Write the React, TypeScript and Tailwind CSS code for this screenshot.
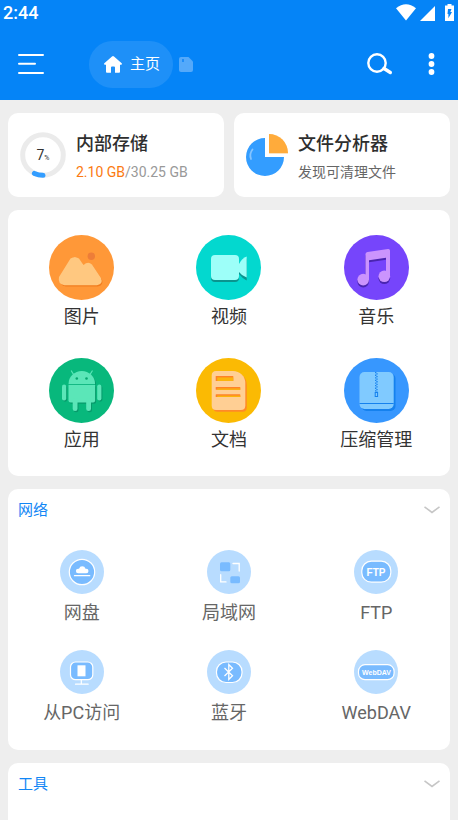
import type { ReactNode } from "react";
import { twMerge } from "tailwind-merge";

type Shortcut = {
  label: string;
  icon: ReactNode;
};

/* ---------- category icons (65 x 65) ---------- */

const PictureIcon = () => (
  <svg viewBox="0 0 65 65" className="size-full">
    <circle cx="32.5" cy="32.5" r="32.5" fill="#ff9838" />
    <path
      d="M22 24q4-4 8 0l4.500 6.500q5-4.500 9 0l9.500 14q2 6-4.500 7H17q-7-1-5.500-8z"
      fill="#f27c1e"
    />
    <path
      d="M21.500 23.500q4.500-3 8.500 0l4.500 6.500q4.500-4 8.500-.5l9 13.500q2.500 6-4 7.200H15.500q-7-1-5.500-8.200z"
      fill="#ffc880"
    />
    <circle cx="42.3" cy="21.3" r="3.7" fill="#ee7d38" />
  </svg>
);

const VideoIcon = () => (
  <svg viewBox="0 0 65 65" className="size-full">
    <circle cx="32.5" cy="32.5" r="32.5" fill="#03d8cf" />
    <g fill="#0a948e">
      <rect x="15" y="22" width="28" height="25" rx="4" />
      <path d="M43 31q3-6 7.700-7.500v22Q46 43 43 39z" />
    </g>
    <g fill="#9dfff9">
      <rect x="15" y="20" width="28" height="25" rx="4" />
      <path d="M43 29q3-6 7.700-7.500v21Q46 41 43 37z" />
    </g>
  </svg>
);

const NoteShape = () => (
  <>
    <circle cx="19.200" cy="44.600" r="5.800" />
    <circle cx="40.300" cy="41.300" r="5.800" />
    <path d="M21.500 19q0-1.800 2-2.100l20.500-2.900q2-.2 2 1.600V41.500h-4V22.700l-17 2.500v19.500h-3.500z" />
  </>
);

const MusicIcon = () => (
  <svg viewBox="0 0 65 65" className="size-full">
    <circle cx="32.5" cy="32.5" r="32.5" fill="#7645fb" />
    <g fill="#4a25b0" transform="translate(0 2)">
      <NoteShape />
    </g>
    <g fill="#cb94fd">
      <NoteShape />
    </g>
  </svg>
);

const AndroidShape = () => (
  <>
    <path d="M19.500 26a13.300 13 0 0 1 26.600 0z" />
    <path d="M19.500 27h26.600v15.500q0 2-2 2H21.500q-2 0-2-2z" />
    <rect x="13" y="26.500" width="4.200" height="16" rx="2.100" />
    <rect x="48.200" y="26.500" width="4.200" height="16" rx="2.100" />
    <rect x="23.700" y="40" width="4.800" height="13" rx="2.300" />
    <rect x="37.200" y="40" width="4.800" height="13" rx="2.300" />
  </>
);

const AppIcon = () => (
  <svg viewBox="0 0 65 65" className="size-full">
    <circle cx="32.5" cy="32.5" r="32.500" fill="#08b87c" />
    <g fill="#079a6b" transform="translate(1 1.2)">
      <AndroidShape />
    </g>
    <g fill="#5be6b8">
      <AndroidShape />
    </g>
    <path
      d="M22.400 13l2.200 3.500M43.200 13L41 16.500"
      stroke="#5be6b8"
      strokeWidth="1.200"
      strokeLinecap="round"
    />
    <path d="M19.500 26.500h26.600" stroke="#19c18a" strokeWidth=".8" />
    <circle cx="27.800" cy="20.500" r="1.300" fill="#08a870" />
    <circle cx="37.500" cy="20.500" r="1.300" fill="#08a870" />
  </svg>
);

const docPath =
  "M20 13h17a12.300 12 0 0 1 12.300 12v22.500q0 4.500-4.500 4.500H20q-4.300 0-4.300-4.500v-30Q15.700 13 20 13z";

const DocIcon = () => (
  <svg viewBox="0 0 65 65" className="size-full">
    <circle cx="32.5" cy="32.5" r="32.5" fill="#fbba03" />
    <path d={docPath} fill="#ff8a28" transform="translate(1.5 1.8)" />
    <path d={docPath} fill="#ffcf94" />
    <g fill="#ff8128">
      <rect x="19.700" y="18" width="17.600" height="5" rx=".6" />
      <rect x="19.700" y="29" width="24.600" height="2.800" rx=".6" />
      <rect x="19.700" y="36.200" width="24.600" height="2.800" rx=".6" />
    </g>
    <g fill="#fbb40c">
      <rect x="21.200" y="19.400" width="16.100" height="3.600" />
      <rect x="21.200" y="30.400" width="23.100" height="1.400" />
      <rect x="21.200" y="37.600" width="23.100" height="1.400" />
    </g>
  </svg>
);

const ZipIcon = () => (
  <svg viewBox="0 0 65 65" className="size-full">
    <circle cx="32.5" cy="32.5" r="32.5" fill="#3797fe" />
    <rect x="17.500" y="15.500" width="34" height="37.500" rx="5" fill="#1581ee" />
    <rect x="15.500" y="14" width="34.200" height="37" rx="5" fill="#80caff" />
    <path d="M15.500 45.500h34.200" stroke="#1581ee" strokeWidth="1" />
    <path d="M31.700 14v20" stroke="#1581ee" strokeWidth="1.300" strokeDasharray="1.300 1.300" />
    <path
      d="M33 15.300v20"
      stroke="#1581ee"
      strokeWidth="1.300"
      strokeDasharray="1.300 1.300"
    />
    <rect x="31.200" y="34.500" width="2.400" height="4" fill="none" stroke="#1581ee" strokeWidth="1" />
  </svg>
);

/* ---------- network icons (44 x 44) ---------- */

const CloudIcon = () => (
  <svg viewBox="0 0 44 44" className="size-full">
    <circle cx="22" cy="22" r="22" fill="#b8dcff" />
    <circle cx="22" cy="22" r="12.700" fill="#79bbff" stroke="#fff" strokeWidth="1.200" />
    <path
      d="M18.200 23.300a2.300 2.300 0 0 1 0-4.600h.8a3.400 3.400 0 0 1 6.500 0h.7a2.300 2.300 0 0 1 0 4.600z"
      fill="#fff"
    />
    <path d="M14.500 25.700h15.200" stroke="#fff" strokeWidth="1.300" strokeLinecap="round" />
  </svg>
);

const LanIcon = () => (
  <svg viewBox="0 0 44 44" className="size-full">
    <circle cx="22" cy="22" r="22" fill="#b8dcff" />
    <rect x="13" y="12.300" width="10.300" height="9" rx="1.500" fill="#79bbff" />
    <rect x="23.300" y="26.300" width="9.700" height="7" rx="1.500" fill="#79bbff" />
    <path
      d="M26 13.500h6.200v7.500M13.700 24.700v7.200H19"
      fill="none"
      stroke="#fff"
      strokeWidth="1.300"
      strokeLinecap="round"
    />
  </svg>
);

const FtpIcon = () => (
  <svg viewBox="0 0 44 44" className="size-full">
    <circle cx="22" cy="22" r="22" fill="#b8dcff" />
    <rect x="7.800" y="11.200" width="29" height="21" rx="9.500" fill="#79bbff" stroke="#fff" strokeWidth="1.200" />
    <text
      x="22"
      y="25.500"
      textAnchor="middle"
      fill="#fff"
      className="font-['Liberation_Sans',sans-serif] text-[10px] font-bold"
    >
      FTP
    </text>
  </svg>
);

const PcIcon = () => (
  <svg viewBox="0 0 44 44" className="size-full">
    <circle cx="22" cy="22" r="22" fill="#b8dcff" />
    <rect x="10.500" y="12" width="22.300" height="17.700" rx="5" fill="#79bbff" stroke="#fff" strokeWidth="1.200" />
    <rect x="17.500" y="15.300" width="8" height="11" fill="#fff" />
    <path
      d="M21.300 30v4M15.500 34.200h12.700"
      stroke="#fff"
      strokeWidth="1.200"
      strokeLinecap="round"
    />
  </svg>
);

const BluetoothIcon = () => (
  <svg viewBox="0 0 44 44" className="size-full">
    <circle cx="22" cy="22" r="22" fill="#b8dcff" />
    <rect x="9.500" y="12" width="25.500" height="20.500" rx="9.500" fill="#79bbff" stroke="#fff" strokeWidth="1.200" />
    <path
      d="M17.500 18l8 7.700-3.700 3.800v-15l3.700 3.800-8 7.700"
      fill="none"
      stroke="#fff"
      strokeWidth="1.300"
    />
  </svg>
);

const WebDavIcon = () => (
  <svg viewBox="0 0 44 44" className="size-full">
    <circle cx="22" cy="22" r="22" fill="#b8dcff" />
    <rect x="4.500" y="14.700" width="35.600" height="15" rx="6.500" fill="#79bbff" stroke="#fff" strokeWidth="1.200" />
    <text
      x="22.500"
      y="25"
      textAnchor="middle"
      fill="#fff"
      className="font-['Liberation_Sans',sans-serif] text-[7px] font-bold"
    >
      WebDAV
    </text>
  </svg>
);

const categories: Shortcut[] = [
  { label: "图片", icon: <PictureIcon /> },
  { label: "视频", icon: <VideoIcon /> },
  { label: "音乐", icon: <MusicIcon /> },
  { label: "应用", icon: <AppIcon /> },
  { label: "文档", icon: <DocIcon /> },
  { label: "压缩管理", icon: <ZipIcon /> },
];

const networks: Shortcut[] = [
  { label: "网盘", icon: <CloudIcon /> },
  { label: "局域网", icon: <LanIcon /> },
  { label: "FTP", icon: <FtpIcon /> },
  { label: "从PC访问", icon: <PcIcon /> },
  { label: "蓝牙", icon: <BluetoothIcon /> },
  { label: "WebDAV", icon: <WebDavIcon /> },
];

function StatusBar() {
  return (
    <div className="flex h-7 items-center justify-between pr-1 pb-0.5 pl-[3px]">
      <span className="text-lg leading-6 font-medium">2:44</span>
      <div className="flex items-center pb-0.5">
        <svg width="20" height="17" viewBox="0 0 20 17" fill="#fff">
          <path d="M10 16.500L0 4.300Q10-3.800 20 4.300z" />
        </svg>
        <svg width="15" height="17" viewBox="0 0 15 17" fill="#fff" className="ml-1">
          <path d="M15 2v15H0z" />
        </svg>
        <svg width="9" height="17" viewBox="0 0 9 17" className="ml-2.5">
          <path d="M2.500 0h4v1.500H9V17H0V1.500h2.500z" fill="#fff" />
          <path d="M3 5h3.500L5.300 8H7l-3.600 6.300V10H2.500z" fill="#0584f7" />
        </svg>
      </div>
    </div>
  );
}

function Toolbar() {
  return (
    <div className="flex h-[72px] items-center pr-[23px] pl-[18px]">
      <button type="button" aria-label="菜单">
        <svg width="26" height="20" viewBox="0 0 26 20" stroke="#fff" strokeWidth="2" strokeLinecap="round">
          <path d="M1 1h24M1 9.700h16M1 19h24" />
        </svg>
      </button>

      <button
        type="button"
        className="ml-[45px] flex h-[47px] items-center gap-2 rounded-full bg-white/10 pr-[13px] pl-[15px] text-[15px]"
      >
        <svg width="18" height="17" viewBox="0 0 18 17" fill="#fff">
          <path d="M9 0q.6 0 1 .4l7.700 6.800q.8 1.300-.7 1.500h-1v7.100q0 .9-.9.900H11V11.500q0-1-1-1H8q-1 0-1 1v5.200H2.900q-.9 0-.9-.9V8.700H1Q-.5 8.500.3 7.200L8 .4Q8.400 0 9 0z" />
        </svg>
        主页
      </button>

      <button type="button" aria-label="存储卡" className="ml-1.5">
        <svg width="14" height="15" viewBox="0 0 14 15">
          <path d="M2 0h7.500L14 4.500V13q0 2-2 2H2q-2 0-2-2V2q0-2 2-2z" fill="#54a9fa" />
          <path d="M3 2h2v3H3z" fill="#1f8df8" />
        </svg>
      </button>

      <button type="button" aria-label="搜索" className="ml-auto">
        <svg width="26" height="22" viewBox="0 0 26 22" fill="none" stroke="#fff">
          <circle cx="10" cy="10" r="8.700" strokeWidth="2.400" />
          <path d="M17 15.500l6.300 4" strokeWidth="3.400" strokeLinecap="round" />
        </svg>
      </button>
      <button type="button" aria-label="更多" className="ml-[35px]">
        <svg width="7" height="22" viewBox="0 0 7 22" fill="#fff">
          <circle cx="3.500" cy="3" r="2.900" />
          <circle cx="3.500" cy="11" r="2.900" />
          <circle cx="3.500" cy="19" r="2.900" />
        </svg>
      </button>
    </div>
  );
}

type SummaryCardProps = {
  title: string;
  icon: ReactNode;
  children: ReactNode;
};

function SummaryCard({ title, icon, children }: SummaryCardProps) {
  return (
    <button
      type="button"
      className="flex h-[84px] items-center gap-2.5 rounded-[10px] bg-white pl-3 text-left"
    >
      {icon}
      <span className="flex flex-col gap-0.5 pt-[3px]">
        <span className="text-lg leading-7 font-medium text-[#2e2e2e]">{title}</span>
        <span className="text-sm leading-6 text-[#666]">{children}</span>
      </span>
    </button>
  );
}

function StorageRing() {
  return (
    <span className="relative flex size-[46px] shrink-0 items-baseline justify-center text-sm leading-[46px] text-[#333]">
      <svg viewBox="0 0 46 46" fill="none" strokeWidth="5" className="absolute inset-0">
        <circle cx="23" cy="23" r="20.300" stroke="#ebebeb" />
        <path d="M23 43.300A20.300 20.300 0 0 1 14.400 41.400" stroke="#339dff" strokeLinecap="round" />
      </svg>
      7<span className="text-[7px]">%</span>
    </span>
  );
}

function PieIcon() {
  return (
    <svg width="42" height="42" viewBox="0 0 42 42" className="shrink-0">
      <path d="M19 4A19 19 0 1 0 38 23H19z" fill="#339dff" />
      <path d="M23 0A19 20 0 0 1 42 20H23z" fill="#ffe3bd" />
      <path d="M23 0A19 19 0 0 1 42 19H23z" fill="#ffab3b" />
      <path d="M6.500 15.500q-3.500 4.500-1.500 9.500" fill="none" stroke="#85c4ff" strokeWidth="1.800" strokeLinecap="round" />
    </svg>
  );
}

type ShortcutGridProps = {
  items: Shortcut[];
  className?: string;
  iconClassName: string;
};

function ShortcutGrid({ items, className, iconClassName }: ShortcutGridProps) {
  return (
    <div className={twMerge("grid grid-cols-3", className)}>
      {items.map((item) => (
        <button key={item.label} type="button" className="flex flex-col items-center">
          <span className={iconClassName}>{item.icon}</span>
          <span className="text-lg leading-7">{item.label}</span>
        </button>
      ))}
    </div>
  );
}

function SectionHeader({ title }: { title: string }) {
  return (
    <div className="flex h-[42px] items-center justify-between px-2.5">
      <h2 className="text-[15px] text-[#1186f5]">{title}</h2>
      <button type="button" aria-label={`展开${title}`}>
        <svg width="16" height="8" viewBox="0 0 16 8" fill="none" stroke="#c6c6c6" strokeWidth="1.600">
          <path d="M.5 .8L8 6.500 15.500 .8" />
        </svg>
      </button>
    </div>
  );
}

export default function App() {
  return (
    <div className="flex min-h-screen flex-col bg-[#eeeeee] font-[Roboto,'Noto_Sans_CJK_SC',sans-serif]">
      <header className="bg-[#0584f7] text-white">
        <StatusBar />
        <Toolbar />
      </header>

      <main className="flex grow flex-col gap-[13px] px-2 pt-[13px]">
        <div className="grid grid-cols-2 gap-2.5">
          <SummaryCard title="内部存储" icon={<StorageRing />}>
            <span className="text-[#fb7a12]">2.10 GB</span>
            <span className="text-[#999]">/30.25 GB</span>
          </SummaryCard>
          <SummaryCard title="文件分析器" icon={<PieIcon />}>
            发现可清理文件
          </SummaryCard>
        </div>

        <section className="rounded-[10px] bg-white pt-[25px] pb-[22px]">
          <ShortcutGrid
            items={categories}
            className="gap-y-[27px] text-[#333]"
            iconClassName="mb-[3px] size-[65px]"
          />
        </section>

        <section className="rounded-[10px] bg-white pb-[23px]">
          <SectionHeader title="网络" />
          <ShortcutGrid
            items={networks}
            className="gap-y-[23px] pt-[19px] text-[#666]"
            iconClassName="mb-[5px] size-11"
          />
        </section>

        <section className="grow rounded-t-[10px] bg-white">
          <SectionHeader title="工具" />
        </section>
      </main>
    </div>
  );
}
